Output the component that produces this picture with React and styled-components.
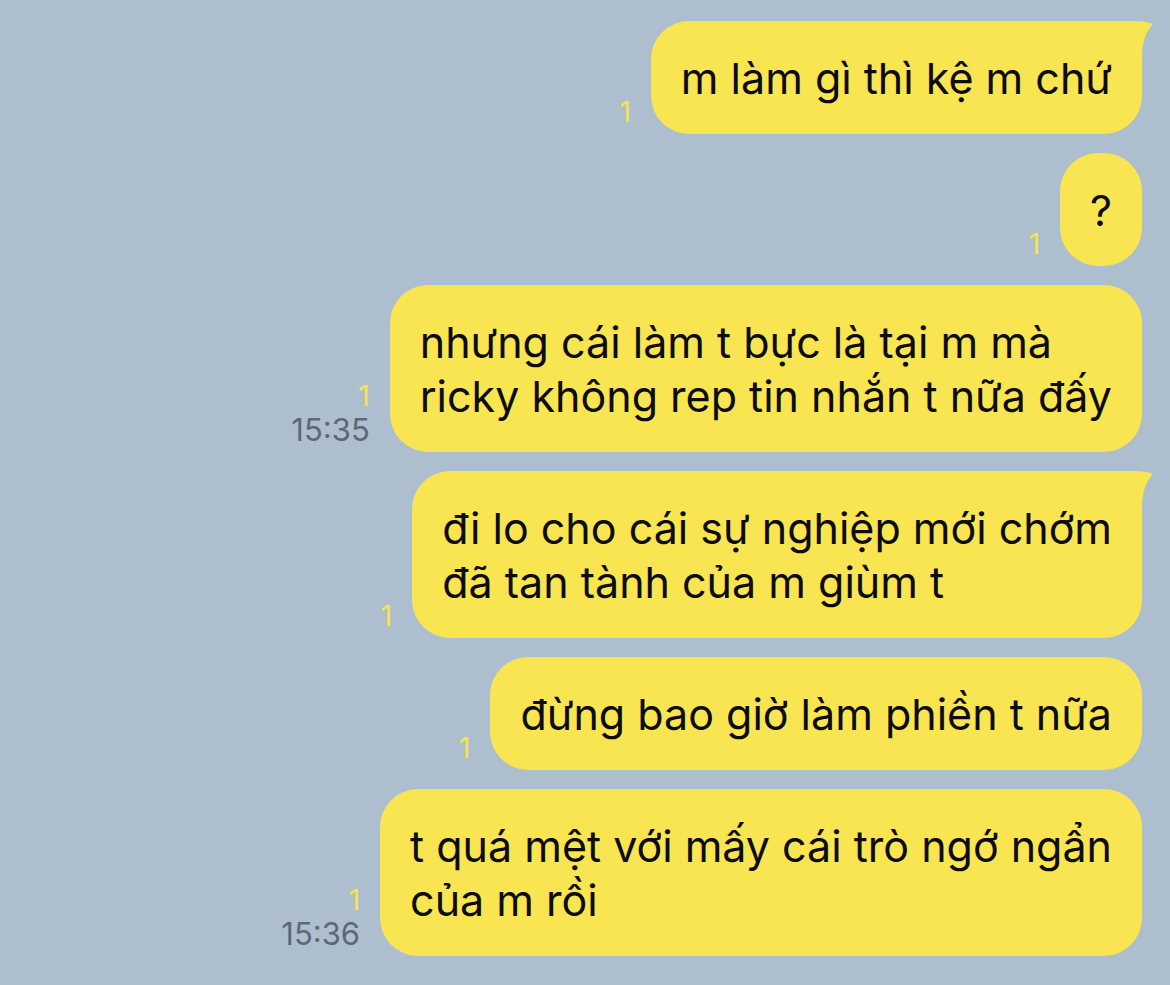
import React from "react";
import styled, { createGlobalStyle } from "styled-components";

const GlobalStyle = createGlobalStyle`
  html, body {
    margin: 0;
    padding: 0;
    background: #adbfcf;
  }
  body {
    font-family: "Inter", "Noto Sans", "Liberation Sans", sans-serif;
  }
`;

const Screen = styled.div`
  width: 1170px;
  height: 985px;
  box-sizing: border-box;
  padding: 21px 28px 0 0;
  background: #adbfcf;
  display: flex;
  flex-direction: column;
  align-items: flex-end;
  gap: 19px;
  overflow: hidden;
`;

const Row = styled.div`
  display: flex;
  align-items: flex-end;
  gap: 20px;
`;

const Meta = styled.div`
  display: flex;
  flex-direction: column;
  align-items: flex-end;
  padding-bottom: 5px;
`;

const ReadCount = styled.span`
  font-size: 28px;
  line-height: 34px;
  color: #f6e34f;
`;

const Time = styled.span`
  font-size: 31px;
  line-height: 34px;
  color: #5d6876;
`;

const Bubble = styled.div`
  position: relative;
  background: #f9e551;
  border-radius: 38px;
  border-top-right-radius: ${(p) => (p.$tail ? "30px" : "38px")};
  padding: 30px 30px 29px;
  font-size: 43px;
  line-height: 54px;
  color: #0c0c0c;
  white-space: nowrap;
`;

const Tail = styled.svg`
  position: absolute;
  top: 0;
  right: -12px;
  width: 44px;
  height: 36px;
`;

const messages = [
  { lines: ["m làm gì thì kệ m chứ"], tail: true },
  { lines: ["?"] },
  {
    lines: ["nhưng cái làm t bực là tại m mà", "ricky không rep tin nhắn t nữa đấy"],
    time: "15:35",
  },
  {
    lines: ["đi lo cho cái sự nghiệp mới chớm", "đã tan tành của m giùm t"],
    tail: true,
  },
  { lines: ["đừng bao giờ làm phiền t nữa"] },
  {
    lines: ["t quá mệt với mấy cái trò ngớ ngẩn", "của m rồi"],
    time: "15:36",
  },
];

const Message = ({ lines, time, tail }) => (
  <Row>
    <Meta>
      <ReadCount>1</ReadCount>
      {time && <Time>{time}</Time>}
    </Meta>
    <Bubble $tail={tail}>
      {tail && (
        <Tail viewBox="0 0 44 36">
          <path d="M0 0 L24 0 C32 0 38 1 43 3 C37 9 32 20 32 36 L0 36 Z" fill="#f9e551" />
        </Tail>
      )}
      {lines.map((l, i) => (
        <div key={i}>{l}</div>
      ))}
    </Bubble>
  </Row>
);

export default function App() {
  return (
    <>
      <GlobalStyle />
      <Screen>
        {messages.map((m, i) => (
          <Message key={i} {...m} />
        ))}
      </Screen>
    </>
  );
}
